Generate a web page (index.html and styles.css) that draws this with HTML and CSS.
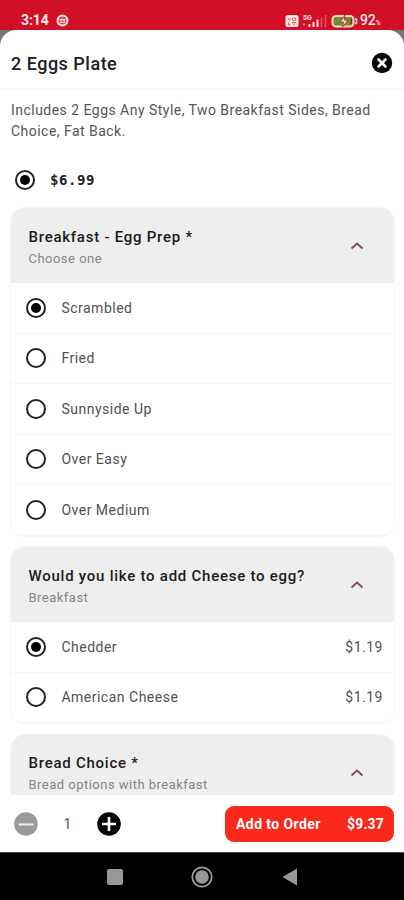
FILE: index.html
```html
<!DOCTYPE html>
<html lang="en">
<head>
<meta charset="utf-8">
<meta name="viewport" content="width=device-width, initial-scale=1">
<title>2 Eggs Plate</title>
<link rel="stylesheet" href="styles.css">
</head>
<body>
<div class="phone">
  <div class="status">
    <span class="time">3:14</span>
    <svg class="face" width="13" height="13" viewBox="0 0 13 13"><circle cx="6.5" cy="6.5" r="5" fill="#e0485a" stroke="#ffe3e6" stroke-width="2"/><path d="M3.500 5.500h6M4 8.500h5M5 5v3.500M8 5v3.500" stroke="#ffd3d8" stroke-width="1"/></svg>
    <svg class="icons" width="74" height="16" viewBox="0 0 74 16">
      <rect x="0.500" y="2" width="13" height="12" rx="2.500" fill="#ffe6e8"/>
      <path d="M3 5l1.500 2.500L6 5M7.500 5h3v2.500h-3zM3.500 9v3h2.500M7 9.500h4M9 9.500v3" stroke="#dc6470" stroke-width="1" fill="none"/>
      <text x="18" y="6.500" class="net">5G</text>
      <path d="M19 10.500v2" stroke="#e98b96" stroke-width="2"/>
      <path d="M24.500 11v3M28.500 9v5M32.500 6.500v7.500" stroke="#ffdfe3" stroke-width="2"/>
      <path d="M36.500 4.500v9.500M40.500 2v12" stroke="#e55a69" stroke-width="1.500"/>
      <rect x="47.500" y="3" width="21" height="10.500" rx="3.500" fill="#62962b" stroke="#f5d3c8" stroke-width="2"/>
      <path d="M70 6h1.500v4.500H70" fill="none" stroke="#f5d3c8" stroke-width="1.500"/>
      <path d="M60 2l-5 7h3.500l-1 5 5.500-7h-4z" fill="#ffe9e2" stroke="#c92a35" stroke-width="1"/>
      <path d="M65.500 5.500h1.500v5.500h-1.500z" fill="#d11028"/>
    </svg>
    <span class="percent">92<small>%</small></span>
  </div>
  <div class="backdrop">
    <main class="sheet">
      <header class="title">
        <h1>2 Eggs Plate</h1>
        <svg width="22" height="22" viewBox="0 0 22 22"><circle cx="11" cy="11" r="10.200" fill="#080808"/><path d="M7.500 7.500l7 7M14.500 7.500l-7 7" stroke="#fff" stroke-width="2.600" stroke-linecap="round"/></svg>
      </header>
      <div class="content">
        <p class="desc">Includes 2 Eggs Any Style, Two Breakfast Sides, Bread<br>Choice, Fat Back.</p>
        <div class="base"><i class="radio on"></i><span>$6.99</span></div>
        <section class="card">
          <div class="head"><div><h2>Breakfast - Egg Prep *</h2><p>Choose one</p></div><svg class="chev" width="14" height="10" viewBox="0 0 14 10"><path d="M1.500 7.500L7 2.500l5.500 5"/></svg></div>
          <div class="row"><i class="radio on"></i><span>Scrambled</span></div>
          <div class="row"><i class="radio"></i><span>Fried</span></div>
          <div class="row"><i class="radio"></i><span>Sunnyside Up</span></div>
          <div class="row"><i class="radio"></i><span>Over Easy</span></div>
          <div class="row"><i class="radio"></i><span>Over Medium</span></div>
        </section>
        <section class="card">
          <div class="head"><div><h2>Would you like to add Cheese to egg?</h2><p>Breakfast</p></div><svg class="chev" width="14" height="10" viewBox="0 0 14 10"><path d="M1.500 7.500L7 2.500l5.500 5"/></svg></div>
          <div class="row"><i class="radio on"></i><span>Chedder</span><b>$1.19</b></div>
          <div class="row"><i class="radio"></i><span>American Cheese</span><b>$1.19</b></div>
        </section>
        <section class="card">
          <div class="head"><div><h2>Bread Choice *</h2><p>Bread options with breakfast</p></div><svg class="chev" width="14" height="10" viewBox="0 0 14 10"><path d="M1.500 7.500L7 2.500l5.500 5"/></svg></div>
        </section>
      </div>
      <footer class="order">
        <svg width="24" height="24" viewBox="0 0 24 24"><circle cx="12" cy="12" r="11.800" fill="#999"/><path d="M4.500 12.500h15" stroke="#eee" stroke-width="2"/></svg>
        <span class="qty">1</span>
        <svg width="24" height="24" viewBox="0 0 24 24"><circle cx="12" cy="12" r="11.800" fill="#050505"/><path d="M5 12h14M12 5v14" stroke="#fff" stroke-width="2.600"/></svg>
        <button class="add"><span class="label">Add to Order</span><span>$9.37</span></button>
      </footer>
    </main>
  </div>
  <nav class="nav">
    <svg width="16" height="16" viewBox="0 0 16 16"><rect width="16" height="16" rx="2" fill="#989898"/></svg>
    <svg width="22" height="22" viewBox="0 0 22 22"><circle cx="11" cy="11" r="9.700" fill="none" stroke="#a0a0a0" stroke-width="1.700"/><circle cx="11" cy="11" r="6.800" fill="#989898"/></svg>
    <svg width="16" height="18" viewBox="0 0 16 18"><path d="M15 0.500v17L0.500 9z" fill="#989898"/></svg>
  </nav>
</div>
</body>
</html>
```
FILE: styles.css
```css
* { box-sizing: border-box; }
body, h1, h2, p { margin: 0; }
body { font-family: Roboto, "Liberation Sans", sans-serif; background: #000; }
.phone { display: flex; flex-direction: column; width: 404px; height: 900px; overflow: hidden; }
.status { height: 30px; flex: none; background: #d11028; display: flex; align-items: center; padding: 11px 22px 0 21px; color: #ffe9eb; }
.time { font-size: 14px; line-height: 16px; font-weight: 700; width: 34.5px; letter-spacing: -0.1px; transform: translateY(-1px); }
.icons { margin-left: auto; }
.net { font-size: 7px; font-weight: 700; fill: #ffdfe3; }
.percent { font-size: 14px; font-weight: 500; line-height: 16px; width: 23px; padding-left: 1px; letter-spacing: -0.2px; white-space: nowrap; padding-top: 2px; }
.percent small { font-size: 7px; }
.backdrop { flex: 1; min-height: 0; background: #757575; display: flex; }
.sheet { flex: 1; min-width: 0; background: #fff; border-radius: 16px 16px 0 0; display: flex; flex-direction: column; overflow: hidden; }
.title { height: 60px; flex: none; border-bottom: 2px solid #f7f7f7; display: flex; align-items: center; justify-content: space-between; padding: 8px 11px 0; }
h1 { font-size: 18px; line-height: 24px; font-weight: 500; letter-spacing: 0.5px; color: #202020; padding-top: 2px; }
.content { flex: 1; min-height: 0; overflow: hidden; padding: 10px 10px 0 11px; }
.desc { font-size: 14px; line-height: 21px; letter-spacing: 0.47px; color: #555; white-space: nowrap; }
.base { height: 66px; display: flex; align-items: center; padding: 9px 0 0 4px; gap: 15px; font: 700 14px "DejaVu Sans Mono", monospace; letter-spacing: 0.6px; color: #222; }
.radio { width: 20px; height: 20px; flex: none; border: 2px solid #222; border-radius: 50%; display: grid; place-items: center; }
.radio.on::after { content: ""; width: 10px; height: 10px; border-radius: 50%; background: #000; }
.card { border-radius: 14px; overflow: hidden; margin-bottom: 11.5px; box-shadow: 0 0 2px #e2e2e2; background: #fff; }
.head { height: 75px; background: #eee; display: flex; align-items: center; justify-content: space-between; padding: 1px 30.5px 0 17.5px; }
h2 { font-size: 15px; line-height: 22px; font-weight: 500; letter-spacing: 0.75px; color: #1b1b1b; white-space: nowrap; padding-top: 3px; }
.head p { font-size: 13px; line-height: 22px; letter-spacing: 0.48px; color: #858585; }
.chev path { fill: none; stroke: #874557; stroke-width: 1.8; }
.row { height: 50.5px; display: flex; align-items: center; padding: 0 11px 0 15.4px; font-size: 14px; letter-spacing: 0.5px; color: #505050; gap: 15px; border-bottom: 1.5px solid #f6f6f6; }
.row b { font-weight: 400; margin-left: auto; }
.order { height: 57px; flex: none; background: #fff; display: flex; align-items: center; padding: 0 10px 0 14px; }
.qty { width: 59px; text-align: center; font-size: 14px; color: #555; }
.add { margin-left: auto; width: 169px; height: 36px; border: 0; border-radius: 9px; background: #f9291b; color: #fff; font: 700 14px Roboto, sans-serif; display: flex; align-items: center; justify-content: space-between; padding: 0 10px 0 11px; letter-spacing: 0.15px; }
.label { letter-spacing: 0.42px; }
.nav { height: 48px; flex: none; background: #000; border-top: 1px solid #444; display: flex; align-items: center; justify-content: center; gap: 68.5px; }
```
